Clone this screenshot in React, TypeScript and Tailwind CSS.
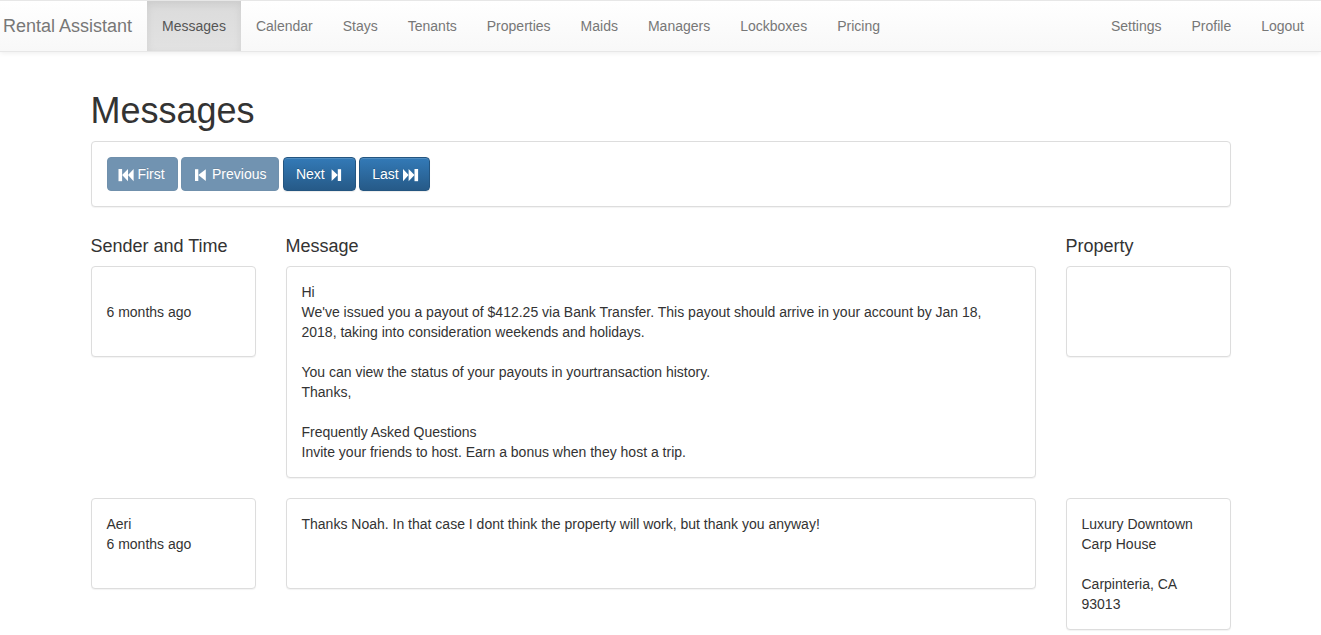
import React from 'react';

const FastBackward = () => (
    <svg width="14" height="14" viewBox="0 0 14 14" className="relative top-[1px] inline-block overflow-visible" fill="currentColor">
        <rect x="-1.5" y="1" width="3.6" height="12.2" />
        <polygon points="2.1,7.1 8,1 8,13.2" />
        <polygon points="8,7.1 13.6,1 13.6,13.2" />
    </svg>
);

const StepBackward = () => (
    <svg width="14" height="14" viewBox="0 0 14 14" className="relative top-[1px] inline-block overflow-visible" fill="currentColor">
        <rect x="1" y="1.2" width="3.3" height="11.8" />
        <polygon points="4.3,7.1 11.8,1.2 11.8,13" />
    </svg>
);

const StepForward = () => (
    <svg width="14" height="14" viewBox="0 0 14 14" className="relative top-[1px] inline-block overflow-visible" fill="currentColor">
        <polygon points="2.6,1.2 8.8,7.1 2.6,13" />
        <rect x="8.8" y="1.2" width="3.3" height="11.8" />
    </svg>
);

const FastForward = () => (
    <svg width="14" height="14" viewBox="0 0 14 14" className="relative top-[1px] inline-block overflow-visible" fill="currentColor">
        <polygon points="0,1 5.6,7.1 0,13.2" />
        <polygon points="5.6,1 11.5,7.1 5.6,13.2" />
        <rect x="11.5" y="1" width="3.6" height="12.2" />
    </svg>
);

const navLinks = ['Calendar', 'Stays', 'Tenants', 'Properties', 'Maids', 'Managers', 'Lockboxes', 'Pricing'];
const rightLinks = ['Settings', 'Profile', 'Logout'];

const btnBase =
    'inline-flex items-center h-[34px] px-[12px] border border-[#245580] rounded-[4px] text-white text-[14px] leading-[20px] [text-shadow:0_-1px_0_rgba(0,0,0,0.2)] shadow-[inset_0_1px_0_rgba(255,255,255,0.15),0_1px_1px_rgba(0,0,0,0.075)]';
const btnOn = btnBase + ' bg-linear-to-b from-[#337ab7] to-[#265a88]';
const btnOff = btnBase + ' bg-[#265a88] opacity-65 shadow-none';

const card =
    'border border-[#ddd] rounded-[4px] bg-white p-[15px] min-h-[91px] mb-[20px] shadow-[0_1px_1px_rgba(0,0,0,0.05)] text-[14px] leading-[20px] text-[#333]';

const firstMessage = `Hi
We've issued you a payout of $412.25 via Bank Transfer. This payout should arrive in your account by Jan 18, 2018, taking into consideration weekends and holidays.

You can view the status of your payouts in yourtransaction history.
Thanks,

Frequently Asked Questions
Invite your friends to host. Earn a bonus when they host a trip.`;

const App: React.FC = () => {
    return (
        <div className="min-h-screen bg-white font-['Liberation_Sans',Arial,sans-serif] text-[#333]">
            {/* Navbar */}
            <nav className="flex justify-between h-[52px] border-y border-[#e7e7e7] bg-linear-to-b from-white to-[#f8f8f8] shadow-[0_1px_5px_rgba(0,0,0,0.075)] text-[14px] leading-[20px] text-[#777]">
                <div className="flex">
                    <span className="pl-[3px] pr-[15px] pt-[15px] text-[18px] leading-[20px] whitespace-nowrap">Rental Assistant</span>
                    <span className="px-[15px] pt-[15px] text-[#555] bg-linear-to-b from-[#dbdbdb] to-[#e2e2e2] shadow-[inset_0_3px_9px_rgba(0,0,0,0.075)]">
                        Messages
                    </span>
                    {navLinks.map(l => (
                        <span key={l} className="px-[15px] pt-[15px]">{l}</span>
                    ))}
                </div>
                <div className="flex pr-[2px]">
                    {rightLinks.map(l => (
                        <span key={l} className="px-[15px] pt-[15px]">{l}</span>
                    ))}
                </div>
            </nav>

            <div className="w-[1170px] mx-auto px-[15px] pt-[19px]">
                <h1 className="text-[36px] leading-[1.1] font-normal mt-[20px] mb-[10px] text-[#333]">Messages</h1>

                {/* Pager */}
                <div className="border border-[#ddd] rounded-[4px] bg-white p-[15px] mb-[20px] shadow-[0_1px_1px_rgba(0,0,0,0.05)]">
                    <div className="flex gap-[3.5px]">
                        <button className={btnOff}><FastBackward />&nbsp;First</button>
                        <button className={btnOff}><StepBackward />&nbsp;Previous</button>
                        <button className={btnOn}>Next&nbsp;<StepForward /></button>
                        <button className={btnOn}>Last&nbsp;<FastForward /></button>
                    </div>
                </div>

                {/* Column headers */}
                <div className="flex -mx-[15px] items-start">
                    <div className="w-[195px] px-[15px]">
                        <h4 className="text-[18px] leading-[1.1] my-[10px]">Sender and Time</h4>
                    </div>
                    <div className="w-[780px] px-[15px]">
                        <h4 className="text-[18px] leading-[1.1] my-[10px]">Message</h4>
                    </div>
                    <div className="w-[195px] px-[15px]">
                        <h4 className="text-[18px] leading-[1.1] my-[10px]">Property</h4>
                    </div>
                </div>

                {/* Row 1 */}
                <div className="flex -mx-[15px] items-start">
                    <div className="w-[195px] px-[15px]">
                        <div className={card}>
                            <div className="min-h-[20px]"></div>
                            <div>6 months ago</div>
                        </div>
                    </div>
                    <div className="w-[780px] px-[15px]">
                        <div className={card + ' whitespace-pre-line'}>{firstMessage}</div>
                    </div>
                    <div className="w-[195px] px-[15px]">
                        <div className={card}></div>
                    </div>
                </div>

                {/* Row 2 */}
                <div className="flex -mx-[15px] items-start">
                    <div className="w-[195px] px-[15px]">
                        <div className={card}>
                            <div>Aeri</div>
                            <div>6 months ago</div>
                        </div>
                    </div>
                    <div className="w-[780px] px-[15px]">
                        <div className={card}>Thanks Noah. In that case I dont think the property will work, but thank you anyway!</div>
                    </div>
                    <div className="w-[195px] px-[15px]">
                        <div className={card}>
                            <div>Luxury Downtown Carp House</div>
                            <div className="h-[20px]"></div>
                            <div>Carpinteria, CA 93013</div>
                        </div>
                    </div>
                </div>
            </div>
        </div>
    );
};

export default App;
